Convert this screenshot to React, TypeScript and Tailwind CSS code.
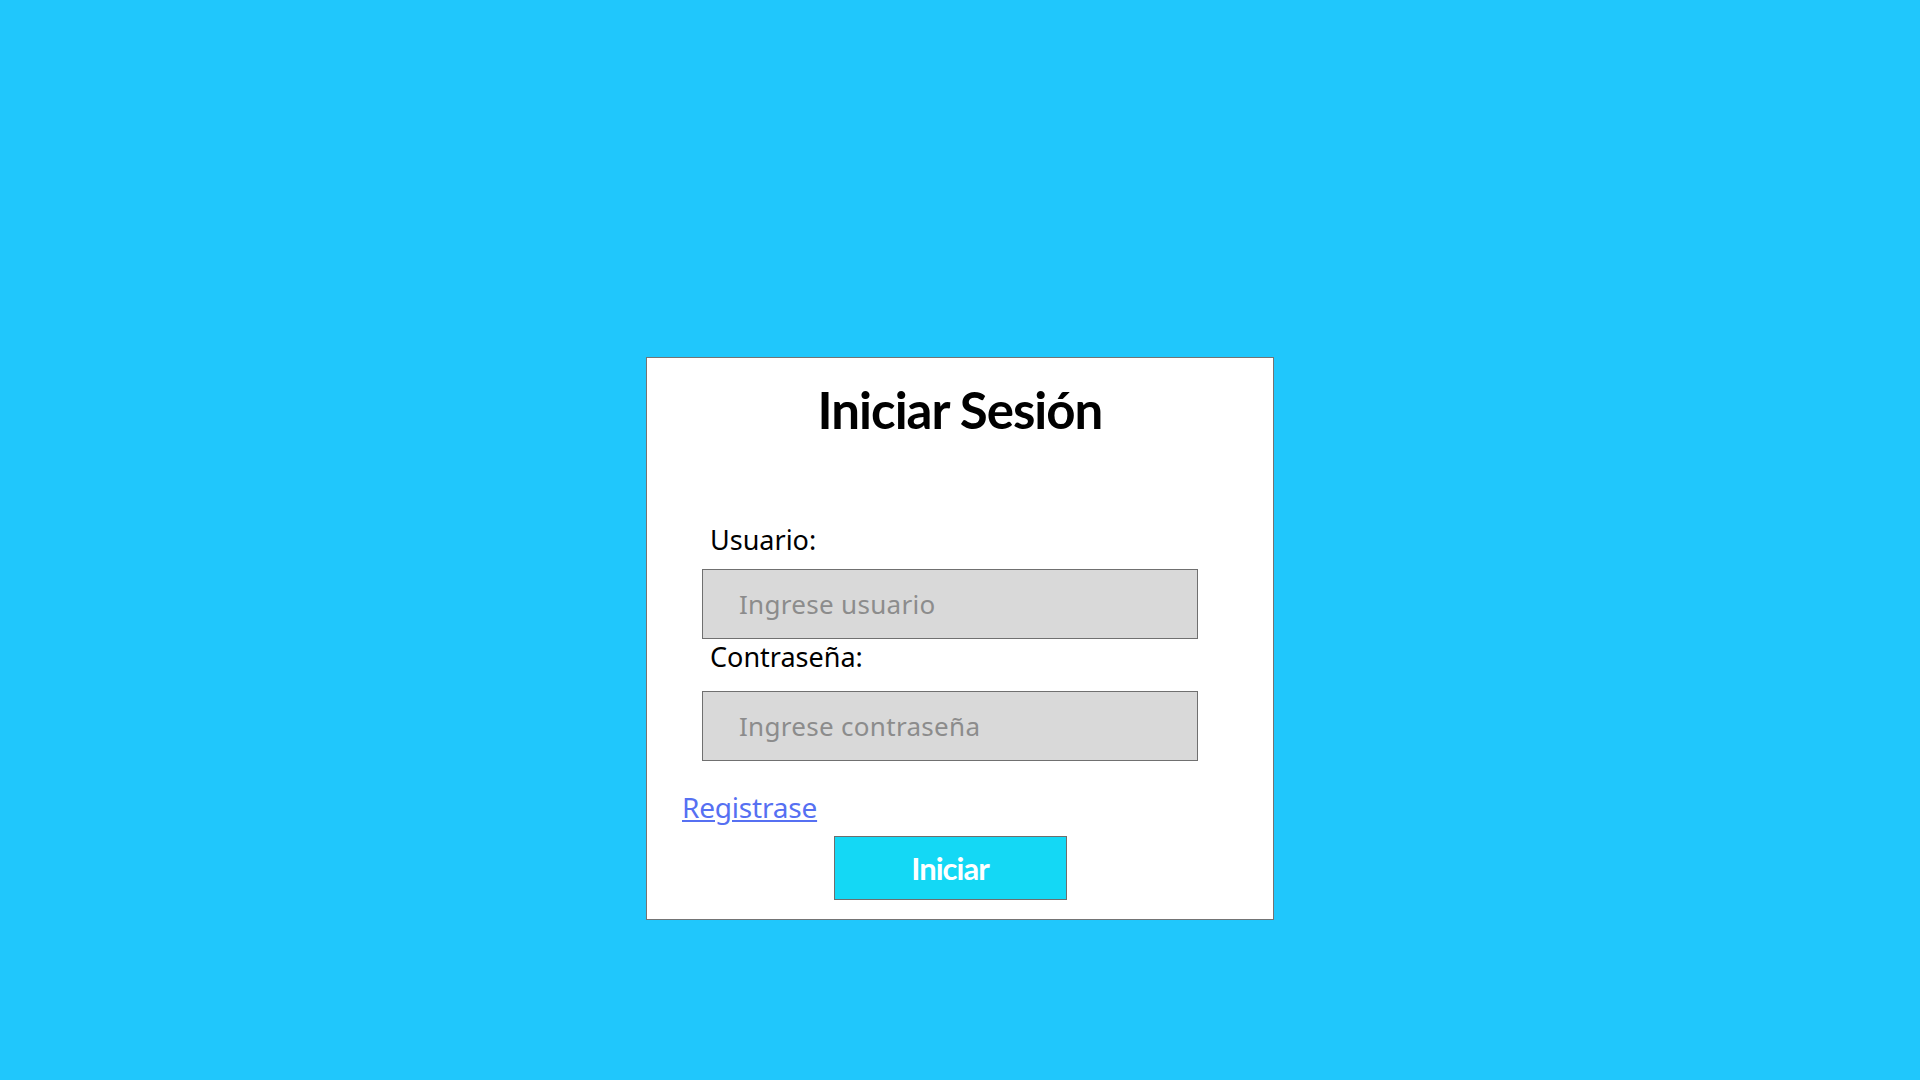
import React from "react";

export default function App() {
  return (
    <div
      className="min-h-screen w-full bg-[#20C7FC] pt-[357px]"
      style={{ fontFamily: '"Noto Sans", "Open Sans", sans-serif' }}
    >
      <div className="mx-auto box-border h-[563px] w-[628px] border border-[#747474] bg-white pt-[26px]">
        <h1
          className="text-center text-[51px] font-bold leading-[52px] tracking-[-1px] text-black"
          style={{ fontFamily: 'Lato, "Noto Sans", sans-serif' }}
        >
          Iniciar Sesión
        </h1>
        <div className="ml-[55px] w-[496px]">
          <label className="mt-[86px] block pl-[8px] text-[27px] leading-[36px] text-black">
            Usuario:
          </label>
          <input
            type="text"
            placeholder="Ingrese usuario"
            className="mt-[11px] box-border block h-[70px] w-[496px] border border-[#707070] bg-[#D9D9D9] pl-[36px] text-[26px] tracking-[0.3px] text-black outline-none placeholder:text-[#8C8C8C]"
          />
          <label className="mt-0 block pl-[8px] text-[27px] leading-[36px] text-black">
            Contraseña:
          </label>
          <input
            type="password"
            placeholder="Ingrese contraseña"
            className="mt-[16px] box-border block h-[70px] w-[496px] border border-[#707070] bg-[#D9D9D9] pl-[36px] text-[26px] tracking-[0.3px] text-black outline-none placeholder:text-[#8C8C8C]"
          />
        </div>
        <div className="mt-[26px] pl-[35px]">
          <a href="#" className="text-[28px] leading-[40px] tracking-[-0.2px] text-[#5670F2] underline">
            Registrase
          </a>
        </div>
        <div className="ml-[55px] mt-[9px] flex w-[496px] justify-center">
          <button
            className="box-border h-[64px] w-[233px] border border-[#6E6E6E] bg-[#14D8F5] text-[31px] font-bold tracking-[-1px] text-white"
            style={{ fontFamily: 'Lato, "Noto Sans", sans-serif' }}
          >
            Iniciar
          </button>
        </div>
      </div>
    </div>
  );
}
